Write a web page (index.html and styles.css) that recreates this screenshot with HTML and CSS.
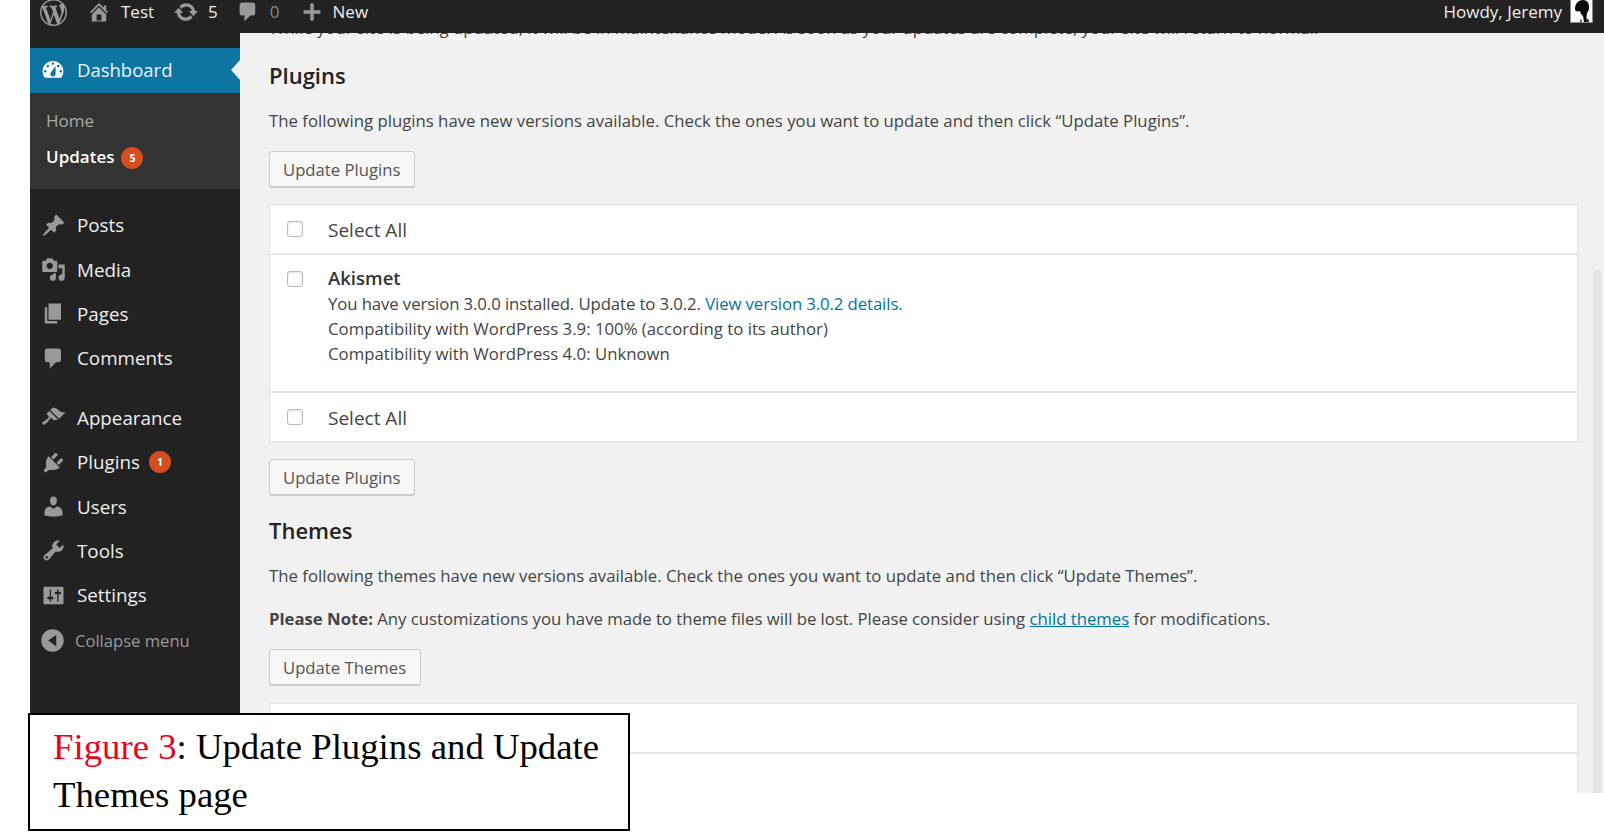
FILE: index.html
```html
<!DOCTYPE html>
<html lang="en">
<head>
<meta charset="utf-8">
<title>WordPress Updates</title>
<link rel="stylesheet" href="styles.css">
</head>
<body>
<div class="screen">
  <header class="topbar">
    <div class="bar-left">
      <svg class="bar-wp" viewBox="0 0 20 20"><path d="M20 10c0-5.51-4.49-10-10-10C4.48 0 0 4.49 0 10c0 5.52 4.48 10 10 10 5.51 0 10-4.48 10-10zM7.78 15.37L4.37 6.22c.55-.02 1.17-.08 1.17-.08.5-.06.44-1.13-.06-1.11 0 0-1.45.11-2.37.11-.18 0-.37 0-.58-.01C4.12 2.69 6.87 1.11 10 1.11c2.33 0 4.45.87 6.05 2.34-.68-.11-1.65.39-1.65 1.58 0 .74.45 1.36.9 2.1.35.61.55 1.36.55 2.46 0 1.49-1.4 5-1.4 5l-3.03-8.37c.54-.02.82-.17.82-.17.5-.05.44-1.25-.06-1.22 0 0-1.44.12-2.38.12-.87 0-2.33-.12-2.33-.12-.5-.03-.56 1.2-.06 1.22l.92.08 1.26 3.41zM17.41 10c.24-.64.74-1.87.43-4.25.7 1.29 1.05 2.71 1.05 4.25 0 3.29-1.73 6.24-4.4 7.78.97-2.59 1.94-5.2 2.92-7.78zM6.1 18.09C3.12 16.65 1.11 13.53 1.11 10c0-1.3.23-2.48.72-3.59C3.25 10.3 4.67 14.2 6.1 18.09zm4.03-6.63l2.58 6.98c-.86.29-1.76.45-2.71.45-.79 0-1.57-.11-2.29-.33.81-2.38 1.62-4.74 2.42-7.1z"/></svg>
      <svg class="bar-icon home" viewBox="0 0 20 20"><path d="M16 8.5l1.53 1.53-1.06 1.06L10 4.62l-6.47 6.47-1.06-1.06L10 2.5l4 4v-2h2v4zm-6-2.46l6 5.99V18H4v-5.97zM12 17v-5H8v5h4z"/></svg>
      <span class="bar-text test">Test</span>
      <svg class="bar-icon upd" viewBox="0 0 20 20"><path d="M10.2 3.28c3.53 0 6.43 2.61 6.92 6h2.08l-3.5 4-3.5-4h2.32c-.45-1.97-2.21-3.44-4.32-3.44-1.45 0-2.73.71-3.54 1.78L4.95 5.66C6.23 4.2 8.11 3.28 10.2 3.28zm-.4 13.44c-3.52 0-6.43-2.61-6.92-6H.8l3.5-4c1.17 1.33 2.33 2.67 3.5 4H5.48c.45 1.97 2.21 3.44 4.32 3.44 1.45 0 2.73-.71 3.54-1.78l1.71 1.95c-1.28 1.46-3.15 2.39-5.25 2.39z"/></svg>
      <span class="bar-text five">5</span>
      <svg class="bar-icon cmt" viewBox="0 0 20 20"><path d="M5 2h9c1.1 0 2 .9 2 2v7c0 1.1-.9 2-2 2h-2l-5 5v-5H5c-1.1 0-2-.9-2-2V4c0-1.1.9-2 2-2z"/></svg>
      <span class="bar-text zero">0</span>
      <svg class="bar-icon plus" viewBox="0 0 20 20"><path d="M17 8.5v3h-5.500V17h-3v-5.500H3v-3h5.500V3h3v5.500z"/></svg>
      <span class="bar-text new">New</span>
    </div>
    <div class="bar-right">
      <span class="bar-text howdy">Howdy, Jeremy</span>
      <svg class="avatar" viewBox="0 0 23 23"><rect width="23" height="23" fill="#888"/><rect x="1" y="0" width="21" height="22" fill="#fff"/><path d="M5 9c0-5 3-9 8-9 4 0 6 3 6 7 0 3-1 5-2 6l-1 9h-2l-1-6-2-2-1-3c-3 1-5 0-5-2z" fill="#0a0a0a"/><path d="M10 22l1-4 1 4zM16 22v-4l3 2v2z" fill="#333"/></svg>
    </div>
  </header>

  <div class="body-row">
    <nav class="sidebar">
      <div class="dash-item">
        <svg class="dash-icon" viewBox="0 0 20 20"><path d="M3.76 16h12.48c1.1-1.37 1.76-3.11 1.76-5 0-4.42-3.58-8-8-8s-8 3.58-8 8c0 1.89.66 3.63 1.76 5zM10 4c.55 0 1 .45 1 1s-.45 1-1 1-1-.45-1-1 .45-1 1-1zM6 6c.55 0 1 .45 1 1s-.45 1-1 1-1-.45-1-1 .45-1 1-1zm8 0c.55 0 1 .45 1 1s-.45 1-1 1-1-.45-1-1 .45-1 1-1zm-5.370 5.550L12 7v6c0 1.100-.9 2-2 2s-2-.9-2-2c0-.57.24-1.080.63-1.450zM4 10c.55 0 1 .45 1 1s-.45 1-1 1-1-.45-1-1 .45-1 1-1zm12 0c.55 0 1 .45 1 1s-.45 1-1 1-1-.45-1-1 .45-1 1-1z" fill-rule="evenodd"/></svg>
        <span>Dashboard</span>
        <i class="dash-arrow"></i>
      </div>
      <div class="submenu">
        <div class="sub-link">Home</div>
        <div class="sub-link current">Updates <b class="badge sub-badge">5</b></div>
      </div>
      <ul class="menu first">
        <li><svg viewBox="0 0 20 20"><path d="M10.44 3.02l1.82-1.82 6.36 6.35-1.83 1.82c-1.05-.68-2.48-.57-3.41.36l-.75.75c-.92.93-1.04 2.35-.35 3.41l-1.83 1.82-2.41-2.41-2.8 2.79c-.42.42-3.38 2.71-3.8 2.29s1.86-3.39 2.28-3.81l2.79-2.79L4.1 9.36l1.83-1.82c1.05.69 2.48.57 3.4-.36l.75-.75c.93-.92 1.05-2.35.36-3.41z"/></svg>Posts</li>
        <li><svg viewBox="0 0 20 20"><path d="M13 11V4c0-.55-.45-1-1-1h-1.67L9 1H5L3.67 3H2c-.55 0-1 .45-1 1v7c0 .55.45 1 1 1h10c.55 0 1-.45 1-1zM7 4.5c1.38 0 2.5 1.12 2.5 2.5S8.38 9.5 7 9.500 4.500 8.380 4.500 7 5.620 4.500 7 4.500zM14 6h5v10.500c0 1.380-1.120 2.500-2.500 2.500S14 17.880 14 16.500s1.120-2.500 2.500-2.500c.17 0 .34.02.5.05V9h-3V6zm-4 8.050V13h2v3.500c0 1.380-1.120 2.500-2.500 2.500S7 17.880 7 16.500 8.120 14 9.500 14c.17 0 .34.02.5.05z"/></svg>Media</li>
        <li><svg viewBox="0 0 20 20"><path d="M6 15V2h10v13H6zm-1 1h8v2H3V5h2v11z"/></svg>Pages</li>
        <li><svg viewBox="0 0 20 20"><path d="M5 2h9c1.100 0 2 .9 2 2v7c0 1.100-.9 2-2 2h-2l-5 5v-5H5c-1.100 0-2-.9-2-2V4c0-1.100.9-2 2-2z"/></svg>Comments</li>
      </ul>
      <ul class="menu second">
        <li><svg viewBox="0 0 20 20"><path d="M14.480 11.060L7.410 3.990l1.500-1.500c.5-.56 2.300-.47 3.510.32 1.210.8 1.430 1.280 2.910 2.100 1.180.64 2.450 1.260 4.450.85zm-.71.71L6.700 4.700 4.930 6.470c-.39.39-.39 1.020 0 1.410l1.060 1.060c.39.39.39 1.030 0 1.420-.6.6-1.430 1.110-2.210 1.690-.35.26-.7.53-1.010.84C1.430 13.230.4 14.420 1.400 15.420c1 1 2.190-.03 3.520-1.360.31-.31.58-.66.84-1.010.58-.78 1.090-1.610 1.690-2.210.39-.39 1.020-.39 1.410 0l1.060 1.060c.39.39 1.020.39 1.410 0z"/></svg>Appearance</li>
        <li><svg viewBox="0 0 20 20"><path d="M13.110 4.360L9.870 7.600 8 5.730l3.240-3.240c.35-.34 1.050-.2 1.560.32.52.51.66 1.210.31 1.550zm-8 1.770l.91-1.120 9.010 9.010-1.190.84c-.71.71-2.630 1.160-3.820 1.160H6.140L4.900 17.260c-.59.59-1.540.59-2.120 0-.59-.58-.59-1.530 0-2.120l1.240-1.240v-3.880c0-1.130.4-3.190 1.090-3.890zm7.260 3.970l3.240-3.240c.34-.35 1.040-.21 1.550.31.52.51.66 1.210.31 1.550l-3.240 3.250z"/></svg>Plugins <b class="badge menu-badge">1</b></li>
        <li><svg viewBox="0 0 20 20"><path d="M10 9.250c-2.270 0-2.730-3.440-2.730-3.440C7 4.020 7.820 2 9.970 2c2.160 0 2.980 2.020 2.710 3.810 0 0-.41 3.440-2.680 3.440zm0 2.570L12.720 10c2.390 0 4.520 2.330 4.520 4.530v2.490s-3.650 1.130-7.240 1.130c-3.650 0-7.240-1.130-7.240-1.130v-2.490c0-2.250 1.940-4.480 4.470-4.480z"/></svg>Users</li>
        <li><svg viewBox="0 0 20 20"><path d="M16.680 9.770c-1.340 1.340-3.300 1.670-4.950.99l-5.410 6.520c-.99.99-2.590.99-3.580 0s-.99-2.590 0-3.570l6.520-5.420c-.68-1.650-.35-3.610.99-4.950 1.280-1.280 3.120-1.620 4.720-1.060l-2.890 2.890 2.820 2.820 2.860-2.870c.53 1.580.18 3.390-1.080 4.650zM3.810 16.210c.4.39 1.040.39 1.430 0 .4-.4.4-1.040 0-1.430-.39-.4-1.030-.4-1.430 0-.39.39-.39 1.030 0 1.430z"/></svg>Tools</li>
        <li><svg viewBox="0 0 20 20"><path d="M18 16V4c0-.55-.45-1-1-1H3c-.55 0-1 .45-1 1v12c0 .55.45 1 1 1h14c.55 0 1-.45 1-1zM8 11h1c.55 0 1 .45 1 1s-.45 1-1 1H8v1.500c0 .28-.22.5-.5.5s-.5-.22-.5-.5V13H6c-.55 0-1-.45-1-1s.45-1 1-1h1V5.500c0-.28.22-.5.5-.5s.5.22.5.5V11zm5-2h-1c-.55 0-1-.45-1-1s.45-1 1-1h1V5.500c0-.28.22-.5.5-.5s.5.22.5.5V7h1c.55 0 1 .45 1 1s-.45 1-1 1h-1v5.500c0 .28-.22.5-.5.5s-.5-.22-.5-.5V9z"/></svg>Settings</li>
        <li class="collapse"><svg viewBox="0 0 20 20"><path fill-rule="evenodd" d="M19 10a9 9 0 1 1-18 0 9 9 0 0 1 18 0zM13 5.500L6.500 10l6.500 4.500z"/></svg>Collapse menu</li>
      </ul>
    </nav>

    <main class="content">
      <p class="clipped">While your site is being updated, it will be in maintenance mode. As soon as your updates are complete, your site will return to normal.</p>
      <h2 class="heading">Plugins</h2>
      <p class="para para-plugins">The following plugins have new versions available. Check the ones you want to update and then click “Update Plugins”.</p>
      <button class="btn btn-a">Update Plugins</button>
      <section class="table table-first">
        <div class="row select"><input type="checkbox" class="check"><span>Select All</span></div>
        <div class="row plugin">
          <input type="checkbox" class="check">
          <div class="plugin-info">
            <strong>Akismet</strong>
            <span class="tight">You have version 3.0.0 installed. Update to 3.0.2. <a href="#">View version 3.0.2 details.</a></span>
            <span>Compatibility with WordPress 3.9: 100% (according to its author)</span>
            <span>Compatibility with WordPress 4.0: Unknown</span>
          </div>
        </div>
        <div class="row select"><input type="checkbox" class="check"><span>Select All</span></div>
      </section>
      <button class="btn btn-b">Update Plugins</button>
      <h2 class="heading themes">Themes</h2>
      <p class="para para-themes">The following themes have new versions available. Check the ones you want to update and then click “Update Themes”.</p>
      <p class="para para-note"><strong>Please Note:</strong> Any customizations you have made to theme files will be lost. Please consider using <a href="#" class="under">child themes</a> for modifications.</p>
      <button class="btn btn-c">Update Themes</button>
      <section class="table table-open">
        <div class="row select blank"></div>
        <div class="row plugin blank"></div>
      </section>
    </main>
    <div class="scrollbar"></div>
  </div>
</div>

<figure class="caption"><span class="red">Figure 3</span>: Update Plugins and Update Themes page</figure>
</body>
</html>
```

FILE: styles.css
```css
* { box-sizing: border-box; }
html, body { margin: 0; padding: 0; background: #fff; }
body { width: 1604px; height: 836px; overflow: hidden; position: relative; font-family: "Open Sans", sans-serif; }

.screen { margin-left: 30px; width: 1574px; height: 793px; display: flex; flex-direction: column; overflow: hidden; }

/* top bar */
.topbar { height: 33px; flex: none; background: #222; display: flex; justify-content: space-between; position: relative; z-index: 2; }
.bar-left, .bar-right { display: flex; align-items: flex-start; }
.bar-text { font-size: 17px; line-height: 24px; color: #eee; }
.bar-wp { width: 27px; height: 27px; margin-left: 10px; margin-top: -1px; fill: #999; }
.bar-icon { width: 24px; height: 24px; fill: #999; flex: none; }
.home { margin-left: 20px; }
.test { margin-left: 10px; }
.upd { width: 26px; height: 26px; margin-left: 19px; margin-top: -1px; }
.five { margin-left: 9px; }
.cmt { margin-left: 18px; }
.zero { margin-left: 10px; color: #888; }
.plus { margin-left: 20px; }
.new { margin-left: 9px; }
.bar-right { padding-right: 11px; }
.howdy { margin-right: 8px; }
.avatar { width: 23px; height: 23px; display: block; }

/* frame */
.body-row { flex: 1; display: flex; min-height: 0; position: relative; }

/* sidebar */
.sidebar { width: 210px; flex: none; background: #222; padding-top: 15px; }
.dash-item { height: 45px; padding-bottom: 2px; background: #0e74a1; color: #eaf6fb; display: flex; align-items: center; font-size: 18.500px; position: relative; }
.dash-icon { width: 26px; height: 26px; fill: #fff; margin-left: 10px; margin-right: 11px; }
.dash-arrow { position: absolute; right: 0; top: 12px; border: 10px solid transparent; border-left-width: 0; border-right: 9px solid #f1f1f1; }
.submenu { height: 96px; background: #333; padding-top: 9px; }
.sub-link { height: 36px; display: flex; align-items: center; padding-left: 16px; font-size: 17px; color: #a9a9a9; }
.sub-link.current { color: #fff; font-weight: 600; }
.badge { width: 22px; height: 22px; border-radius: 50%; background: #d54e21; color: #fff; font-size: 10.500px; font-weight: 700; display: flex; align-items: center; justify-content: center; }
.sub-badge { margin-left: 7px; margin-top: 4px; }
.menu { list-style: none; margin: 0; padding: 0; }
.menu.first { margin-top: 14px; }
.menu.second { margin-top: 15px; }
.menu li { height: 44.400px; display: flex; align-items: center; font-size: 18.800px; color: #eee; }
.menu li svg { width: 25px; height: 25px; fill: #999; margin-left: 11px; margin-right: 11px; flex: none; }
.menu-badge { margin-left: 9px; }
.menu li.collapse { height: 45px; font-size: 16.600px; color: #999; }
.menu li.collapse svg { margin-right: 10px; margin-left: 10px; }

/* content */
.content { flex: 1; min-width: 0; background: #f1f1f1; padding: 0 26px 0 29px; color: #444; font-size: 16.760px; }
.clipped { margin: -17px 0 0; line-height: 24px; white-space: nowrap; }
.heading { margin: 20px 0 0; font-size: 22px; line-height: 30px; font-weight: 600; color: #222; }
.para { margin: 0; line-height: 24px; white-space: nowrap; }
.para-plugins { margin-top: 19px; }
.para-themes { margin-top: 19px; }
.para-note { margin-top: 19px; letter-spacing: -.02px; }
.para a, .plugin-info a { color: #0074a2; text-decoration: none; }
.para a.under { text-decoration: underline; }
.btn { display: block; height: 36px; padding: 0 14px 0 13px; font: inherit; font-size: 16.700px; color: #555; background: #f7f7f7; border: 1px solid #ccc; border-radius: 3px; box-shadow: 0 1px 0 #ccc; white-space: nowrap; }
.btn-a { margin-top: 18px; }
.btn-b { margin-top: 17px; }
.btn-c { margin-top: 18px; }

.table { margin-top: 18px; background: #fff; border: 1px solid #e5e5e5; box-shadow: 0 1px 1px rgba(0,0,0,.04); }
.table-first { margin-top: 17px; }
.row { display: flex; padding-left: 17px; }
.row.select { height: 50px; align-items: center; border-bottom: 2px solid #e5e5e5; }
.row.select:last-child { height: 48px; border-bottom: 0; }
.row.plugin { height: 138px; border-bottom: 2px solid #e5e5e5; padding-top: 9px; }
.table-open { border-bottom: 0; }
.table-open .plugin { border-bottom: 0; }
.check { appearance: none; -webkit-appearance: none; width: 16px; height: 16px; margin: 0; flex: none; background: #fff; border: 1px solid #b4b9be; border-radius: 3px; box-shadow: inset 0 1px 2px rgba(0,0,0,.1); }
.row .check + span { margin-left: 25px; padding-top: 1px; font-size: 19px; line-height: 24px; color: #444; }
.plugin .check { margin-top: 7px; }
.plugin-info { margin-left: 25px; display: flex; flex-direction: column; line-height: 25px; }
.plugin-info strong { font-size: 18.500px; font-weight: 600; line-height: 27px; color: #333; }
.tight { letter-spacing: -.1px; }

.scrollbar { position: absolute; right: 3px; top: 237px; bottom: 0; width: 8px; background: #e3e3e3; border-radius: 4px 4px 0 0; }

/* figure caption */
.caption { position: absolute; left: 28px; top: 713px; width: 602px; height: 118px; margin: 0; padding: 8px 23px 0; background: #fff; border: 2px solid #000; font-family: "Liberation Serif", serif; font-size: 36.750px; line-height: 48px; color: #000; }
.red { color: #f0001c; }
```
